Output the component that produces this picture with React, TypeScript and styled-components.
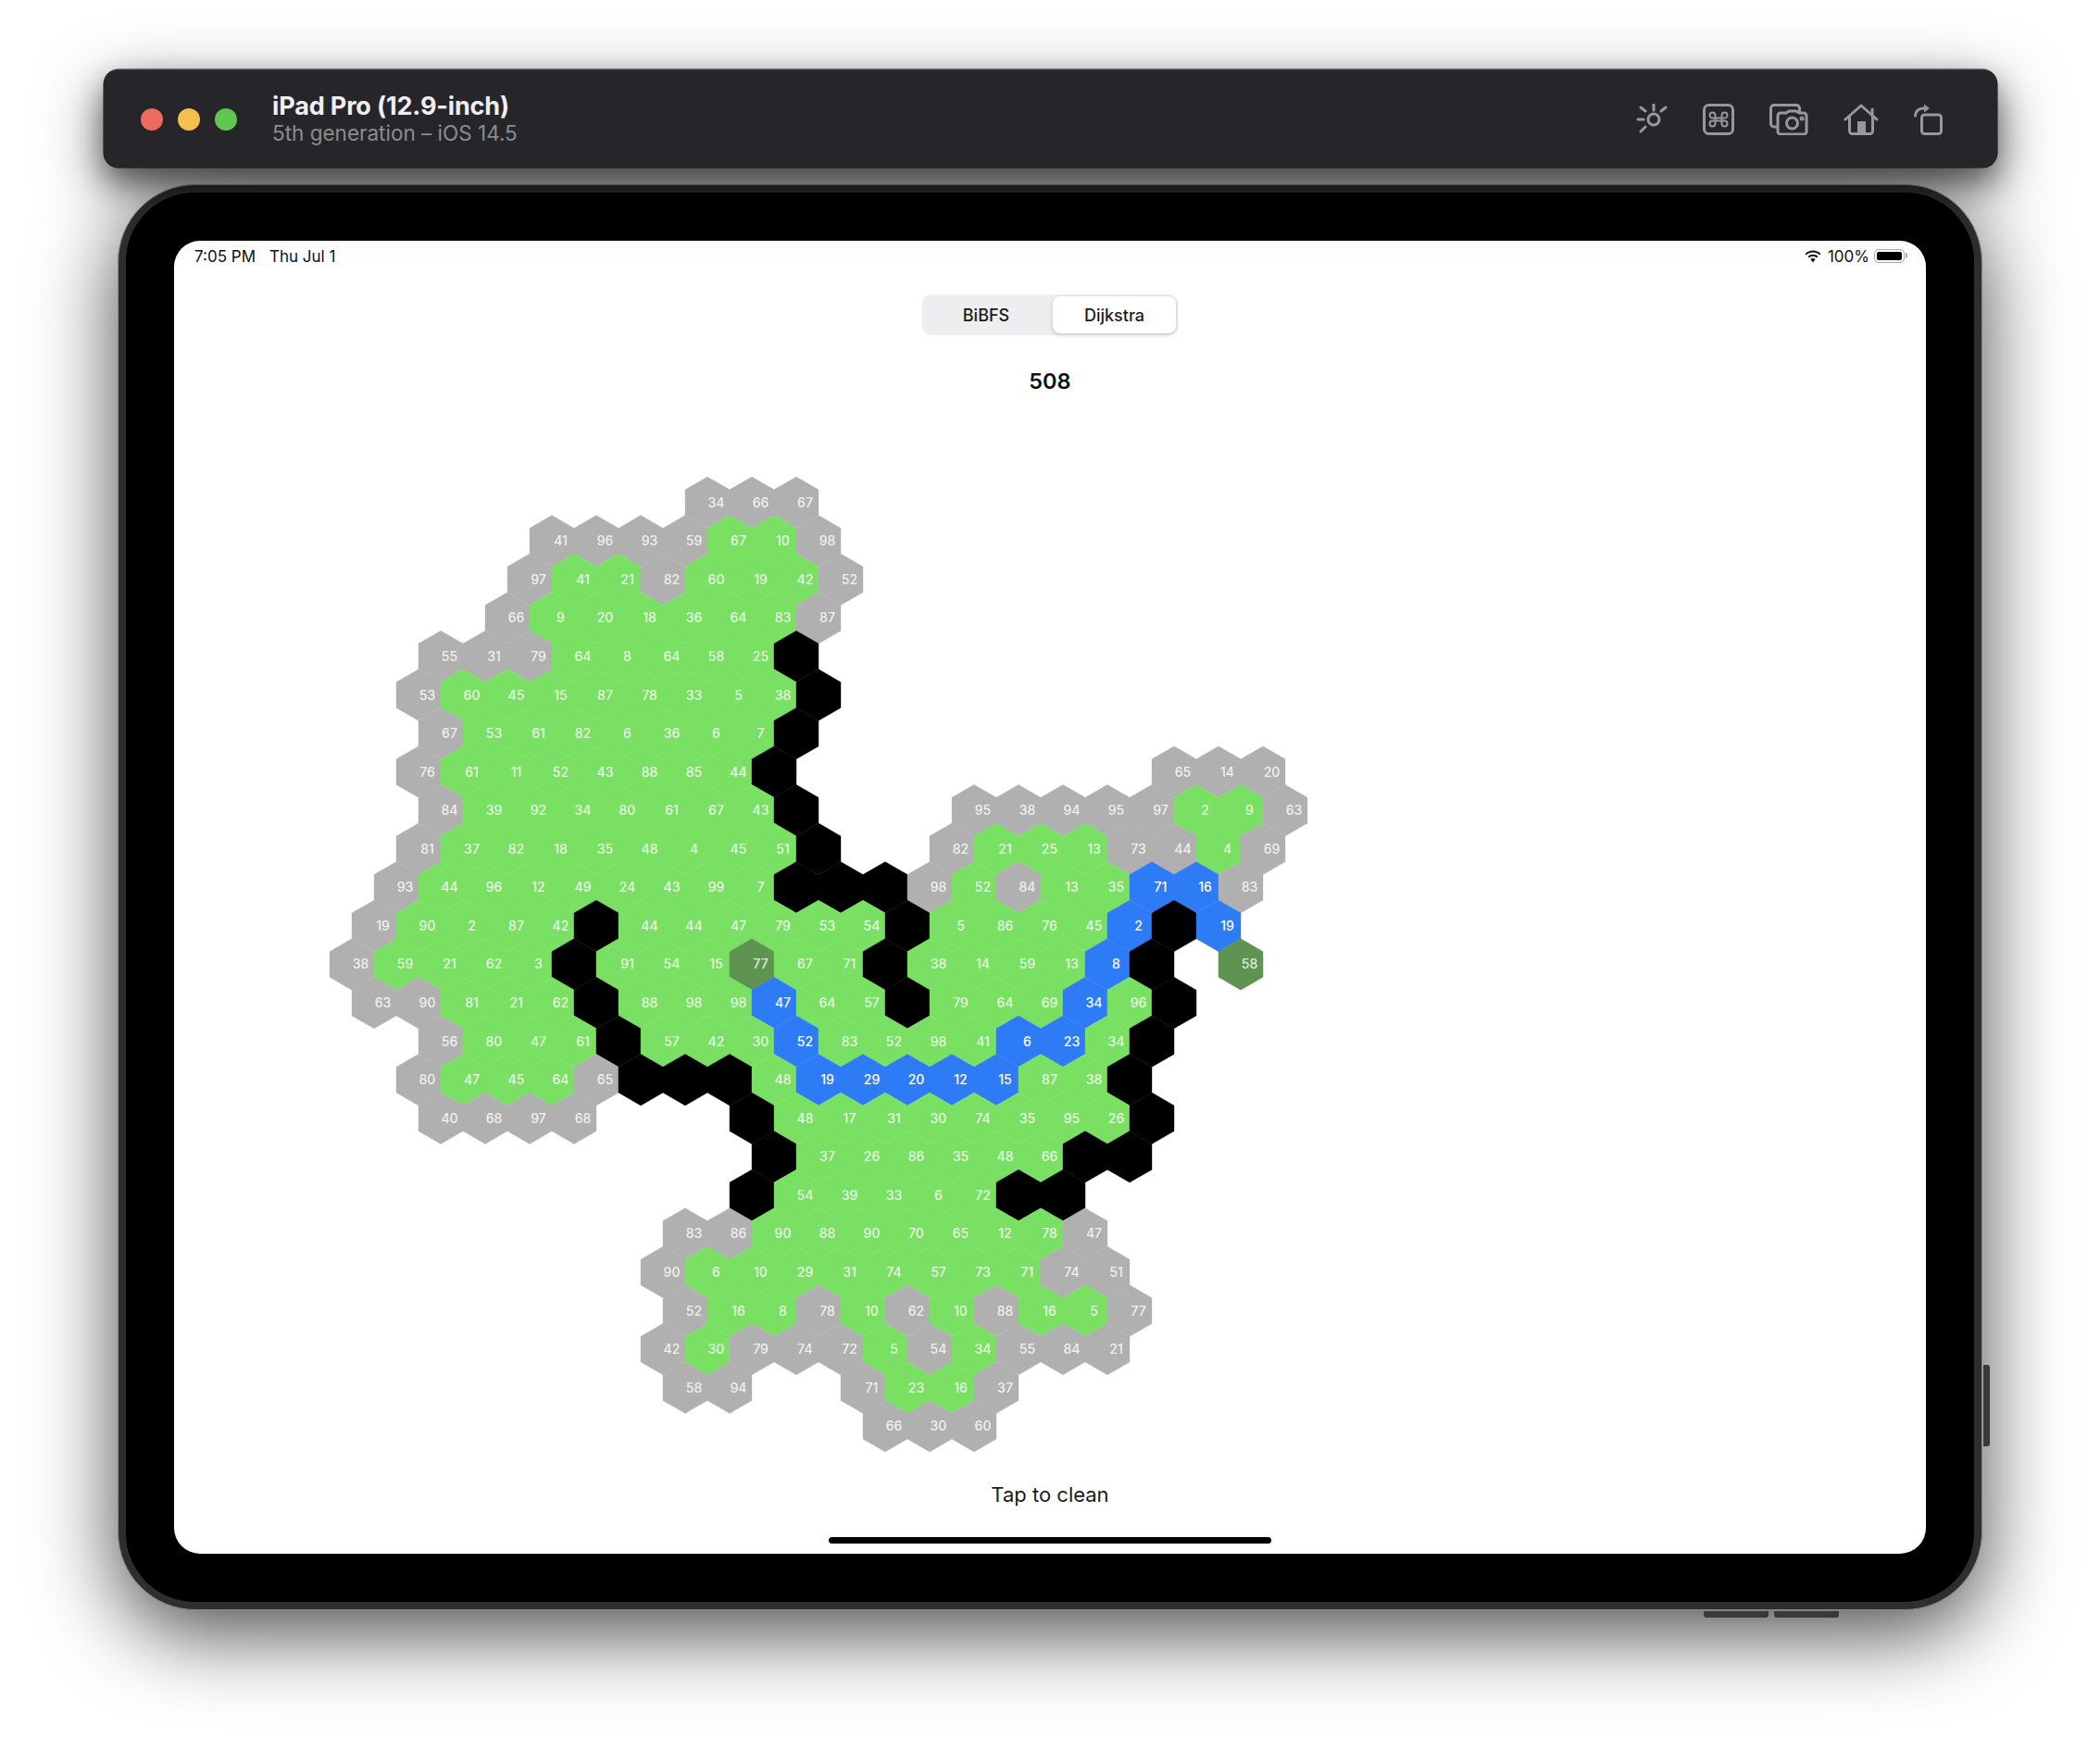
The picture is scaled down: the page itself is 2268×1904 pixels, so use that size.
import React from "react";
import styled, { createGlobalStyle } from "styled-components";

const GlobalStyle = createGlobalStyle`
  html, body {
    margin: 0;
    padding: 0;
    background: #fff;
    font-family: Inter, "Liberation Sans", sans-serif;
  }
`;

const Page = styled.div`
  width: 2268px;
  height: 1904px;
  padding-top: 75px;
  box-sizing: border-box;
  overflow: hidden;
  display: flex;
  flex-direction: column;
  align-items: center;
`;

const Toolbar = styled.header`
  position: relative;
  z-index: 2;
  width: 2045px;
  height: 106px;
  margin-right: -1px;
  padding: 0 59px 0 40px;
  box-sizing: border-box;
  display: flex;
  align-items: center;
  background: #26252a;
  border-radius: 16px;
  border-top: 1px solid #3c3b40;
  box-shadow: 0 0 0 0.5px #111, 0 16px 32px rgba(0, 0, 0, 0.48), 0 20px 70px rgba(0, 0, 0, 0.5);
`;

const Lights = styled.div`
  display: flex;
  gap: 16px;
  margin-right: 38px;
`;

const Light = styled.span<{ $color: string }>`
  width: 24px;
  height: 24px;
  border-radius: 50%;
  background: ${(p) => p.$color};
`;

const DeviceInfo = styled.div`
  display: flex;
  flex-direction: column;
  flex: 1;
  margin-top: -1px;
`;

const DeviceName = styled.div`
  font-size: 27px;
  line-height: 32px;
  font-weight: 700;
  letter-spacing: -0.15px;
  color: #efeff1;
`;

const DeviceOs = styled.div`
  font-size: 22.5px;
  line-height: 26px;
  color: #8d8c91;
`;

const ToolIcons = styled.div`
  display: flex;
  align-items: center;
  gap: 38px;
`;

const ToolIcon = styled.svg`
  display: block;
  fill: none;
  stroke: #98979c;
  stroke-width: 3;
  stroke-linecap: round;
  stroke-linejoin: round;
`;

const Device = styled.div`
  position: relative;
  margin-top: 18px;
  width: 2014px;
  height: 1540px;
  padding: 8px;
  box-sizing: border-box;
  background: #2e2e2e;
  border: 1px solid #8a8a8a;
  border-radius: 84px;
  box-shadow: 0 24px 90px rgba(0, 0, 0, 0.72);
`;

const SideButton = styled.span`
  position: absolute;
  right: -9px;
  top: 1274px;
  width: 7px;
  height: 88px;
  background: #3a3a3a;
  border-radius: 0 3px 3px 0;
`;

const VolumeButton = styled.span<{ $left: number }>`
  position: absolute;
  bottom: -9px;
  left: ${(p) => p.$left}px;
  width: 70px;
  height: 7px;
  background: #3a3a3a;
  border-radius: 0 0 3px 3px;
`;

const Bezel = styled.div`
  height: 100%;
  padding: 52px;
  box-sizing: border-box;
  background: #000;
  border-radius: 74px;
`;

const Screen = styled.main`
  height: 100%;
  background: #fff;
  border-radius: 28px;
  display: flex;
  flex-direction: column;
  align-items: center;
`;

const StatusBar = styled.div`
  align-self: stretch;
  height: 33px;
  padding: 0 23px 0 22px;
  display: flex;
  align-items: center;
  justify-content: space-between;
  font-size: 17px;
  color: #111;
`;

const StatusGroup = styled.div`
  display: flex;
  align-items: center;
`;

const StatusTime = styled.span`
  margin-right: 15px;
`;

const BatteryLabel = styled.span`
  margin: 0 5px 0 6px;
`;

const Battery = styled.span`
  position: relative;
  width: 33px;
  height: 15px;
  padding: 2px;
  box-sizing: border-box;
  border: 1.5px solid #a9a9a9;
  border-radius: 5px;

  &::before {
    content: "";
    display: block;
    height: 100%;
    background: #000;
    border-radius: 2px;
  }

  &::after {
    content: "";
    position: absolute;
    right: -4px;
    top: 3px;
    width: 2px;
    height: 6px;
    background: #a9a9a9;
    border-radius: 0 2px 2px 0;
  }
`;

const Segmented = styled.div`
  margin-top: 25px;
  width: 276px;
  height: 44px;
  padding: 2px;
  box-sizing: border-box;
  background: #eeeef0;
  border-radius: 10px;
  display: grid;
  grid-template-columns: 139px 1fr;
`;

const Segment = styled.div<{ $active?: boolean }>`
  display: flex;
  align-items: center;
  justify-content: center;
  padding-right: ${(p) => (p.$active ? 0 : 5)}px;
  font-size: 18px;
  font-weight: 500;
  color: #1a1a1a;
  border-radius: 8px;
  background: ${(p) => (p.$active ? "#fff" : "transparent")};
  box-shadow: ${(p) => (p.$active ? "0 2px 5px rgba(0,0,0,.16), 0 0 1px rgba(0,0,0,.08)" : "none")};
`;

const Counter = styled.div`
  margin-top: 34px;
  font-size: 23.5px;
  line-height: 31px;
  font-weight: 600;
  color: #111;
`;

const Board = styled.svg`
  display: block;
  margin-top: 73px;
  flex: none;
`;

const kindColors: Record<string, string> = {
  green: "#7ae064",
  gray: "#b0b0b0",
  blue: "#2e7bf6",
  dark: "#5e9352",
  wall: "#000",
};

const Hex = styled.polygon<{ $kind: string }>`
  fill: ${(p) => kindColors[p.$kind]};
  stroke: ${(p) => kindColors[p.$kind]};
  stroke-width: 0.4;
`;

const HexLabel = styled.text<{ $kind: string }>`
  font-family: Inter, "Liberation Sans", sans-serif;
  font-size: 14px;
  font-weight: 500;
  text-anchor: middle;
  dominant-baseline: central;
  fill: ${(p) => (p.$kind === "blue" ? "#fff" : "rgba(255,255,255,.84)")};
`;

const CleanHint = styled.div`
  margin-top: 19px;
  font-size: 22px;
  line-height: 30px;
  color: #1a1a1a;
`;

const HomeIndicator = styled.div`
  margin-top: 31px;
  width: 478px;
  height: 7px;
  background: #000;
  border-radius: 4px;
`;

// one entry per row: first column (in half cells from the "34" cell) and the cells
// G gray, b blue, d start/end, # wall, . nothing, plain number = visited
const rows: [number, string][] = [
  [0, "G34 G66 G67"],
  [-7, "G41 G96 G93 G59 67 10 G98"],
  [-8, "G97 41 21 G82 60 19 42 G52"],
  [-9, "G66 9 20 18 36 64 83 G87"],
  [-12, "G55 G31 G79 64 8 64 58 25 #"],
  [-13, "G53 60 45 15 87 78 33 5 38 #"],
  [-12, "G67 53 61 82 6 36 6 7 #"],
  [-13, "G76 61 11 52 43 88 85 44 # . . . . . . . . G65 G14 G20"],
  [-12, "G84 39 92 34 80 61 67 43 # . . . G95 G38 G94 G95 G97 2 9 G63"],
  [-13, "G81 37 82 18 35 48 4 45 51 # . . G82 21 25 13 G73 G44 4 G69"],
  [-14, "G93 44 96 12 49 24 43 99 7 # # # G98 52 G84 13 35 b71 b16 G83"],
  [-15, "G19 90 2 87 42 # 44 44 47 79 53 54 # 5 86 76 45 b2 # b19"],
  [-16, "G38 59 21 62 3 # 91 54 15 d77 67 71 # 38 14 59 13 b8 # . d58"],
  [-15, "G63 G90 81 21 62 # 88 98 98 b47 64 57 # 79 64 69 b34 96 #"],
  [-12, "G56 80 47 61 # 57 42 30 b52 83 52 98 41 b6 b23 34 #"],
  [-13, "G80 47 45 64 G65 # # # 48 b19 b29 b20 b12 b15 87 38 #"],
  [-12, "G40 G68 G97 G68 . . . # 48 17 31 30 74 35 95 26 #"],
  [3, "# 37 26 86 35 48 66 # #"],
  [2, "# 54 39 33 6 72 # #"],
  [-1, "G83 G86 90 88 90 70 65 12 78 G47"],
  [-2, "G90 6 10 29 31 74 57 73 71 G74 G51"],
  [-1, "G52 16 8 G78 10 G62 10 G88 16 5 G77"],
  [-2, "G42 30 G79 G74 G72 5 G54 34 G55 G84 G21"],
  [-1, "G58 G94 . . G71 23 16 G37"],
  [8, "G66 G30 G60"],
];

const SIDE = 27.71;
const HALF_W = 24;
const ROW_H = SIDE * 1.5;
const ORIGIN_X = 576;
const ORIGIN_Y = 42.7;

const hexPoints = (cx: number, cy: number) =>
  [
    [cx, cy - SIDE],
    [cx + HALF_W, cy - SIDE / 2],
    [cx + HALF_W, cy + SIDE / 2],
    [cx, cy + SIDE],
    [cx - HALF_W, cy + SIDE / 2],
    [cx - HALF_W, cy - SIDE / 2],
  ]
    .map((p) => p.join(","))
    .join(" ");

const parseCell = (token: string) => {
  if (token === "#") return { kind: "wall", value: "" };
  const prefix = token[0];
  if (prefix === "G") return { kind: "gray", value: token.slice(1) };
  if (prefix === "b") return { kind: "blue", value: token.slice(1) };
  if (prefix === "d") return { kind: "dark", value: token.slice(1) };
  return { kind: "green", value: token };
};

const cells = rows.flatMap(([start, line], r) =>
  line.split(" ").flatMap((token, i) => {
    if (token === ".") return [];
    return [
      {
        ...parseCell(token),
        key: `${r}-${i}`,
        cx: ORIGIN_X + (start + i * 2) * HALF_W,
        cy: ORIGIN_Y + r * ROW_H,
      },
    ];
  })
);

const SunIcon = () => (
  <ToolIcon width="34" height="34" viewBox="0 0 34 34">
    <circle cx="19" cy="17" r="6" />
    <path d="M19 1v6M32 4l-5 4M2 17h6M5 4l5 4M5 30l5-5" />
  </ToolIcon>
);

const CommandIcon = () => (
  <ToolIcon width="34" height="34" viewBox="0 0 34 34">
    <rect x="1.5" y="1.5" width="31" height="31" rx="5" />
    <path
      strokeWidth="2"
      d="M20.5 12.5v9a3 3 0 1 0 3-3h-13a3 3 0 1 0 3 3v-9a3 3 0 1 0-3 3h13a3 3 0 1 0-3-3"
    />
  </ToolIcon>
);

const CameraIcon = () => (
  <ToolIcon width="42" height="34" viewBox="0 0 42 34">
    <path d="M9 25H5a3.5 3.5 0 0 1-3.500-3.500V5A3.500 3.500 0 0 1 5 1.500h24A3.500 3.500 0 0 1 32.500 5v4" />
    <path d="M12 10h6l3-2h8l3 2h5a3 3 0 0 1 3 3v17a3 3 0 0 1-3 3H12a3 3 0 0 1-3-3V13a3 3 0 0 1 3-3z" fill="#26252a" />
    <circle cx="24.500" cy="21" r="6" />
    <circle cx="35" cy="16" r="1" />
  </ToolIcon>
);

const HomeIcon = () => (
  <ToolIcon width="38" height="34" viewBox="0 0 38 34">
    <path d="M2 17L19 2l17 15M31 6v6" />
    <path d="M6.500 14v15.500a3 3 0 0 0 3 3h19a3 3 0 0 0 3-3V14" />
    <rect x="15" y="19" width="9" height="14" fill="#98979c" stroke="none" />
  </ToolIcon>
);

const RotateIcon = () => (
  <ToolIcon width="31" height="34" viewBox="0 0 31 34">
    <rect x="8.500" y="12" width="21" height="20.500" rx="3" />
    <path d="M1.500 13a8 8 0 0 1 8-8h4" />
    <path d="M11 0.500L17 5l-6 4.500z" fill="#98979c" stroke="none" />
  </ToolIcon>
);

const WifiIcon = styled.svg`
  display: block;
  fill: #111;
`;

export default function App() {
  return (
    <Page>
      <GlobalStyle />
      <Toolbar>
        <Lights>
          <Light $color="#ec6a5e" />
          <Light $color="#f4bf4f" />
          <Light $color="#61c554" />
        </Lights>
        <DeviceInfo>
          <DeviceName>iPad Pro (12.9-inch)</DeviceName>
          <DeviceOs>5th generation – iOS 14.5</DeviceOs>
        </DeviceInfo>
        <ToolIcons>
          <SunIcon />
          <CommandIcon />
          <CameraIcon />
          <HomeIcon />
          <RotateIcon />
        </ToolIcons>
      </Toolbar>
      <Device>
        <SideButton />
        <VolumeButton $left={1712} />
        <VolumeButton $left={1788} />
        <Bezel>
          <Screen>
            <StatusBar>
              <StatusGroup>
                <StatusTime>7:05 PM</StatusTime>
                <span>Thu Jul 1</span>
              </StatusGroup>
              <StatusGroup>
                <WifiIcon width="20" height="14" viewBox="0 0 20 14">
                  <path d="M10 2.600c2.700 0 5.200 1 7.100 2.800l1.400-1.500C16.200 1.700 13.200.4 10 .4S3.800 1.700 1.500 3.900l1.400 1.500C4.800 3.600 7.300 2.600 10 2.600z" />
                  <path d="M10 6.800c1.500 0 2.900.6 4 1.600l1.500-1.500C14 5.500 12.100 4.700 10 4.700s-4 .8-5.500 2.200L6 8.400c1.100-1 2.500-1.600 4-1.600z" />
                  <path d="M10 9c-1 0-1.900.4-2.600 1L10 13.400l2.600-3.400C11.900 9.400 11 9 10 9z" />
                </WifiIcon>
                <BatteryLabel>100%</BatteryLabel>
                <Battery />
              </StatusGroup>
            </StatusBar>
            <Segmented>
              <Segment>BiBFS</Segment>
              <Segment $active>Dijkstra</Segment>
            </Segmented>
            <Counter>508</Counter>
            <Board width="1892" height="1080" viewBox="0 0 1892 1080">
              {cells.map((c) => (
                <Hex key={c.key} $kind={c.kind} points={hexPoints(c.cx, c.cy)} />
              ))}
              {cells
                .filter((c) => c.value)
                .map((c) => (
                  <HexLabel key={c.key} $kind={c.kind} x={c.cx + 9.5} y={c.cy - 0.5}>
                    {c.value}
                  </HexLabel>
                ))}
            </Board>
            <CleanHint>Tap to clean</CleanHint>
            <HomeIndicator />
          </Screen>
        </Bezel>
      </Device>
    </Page>
  );
}
